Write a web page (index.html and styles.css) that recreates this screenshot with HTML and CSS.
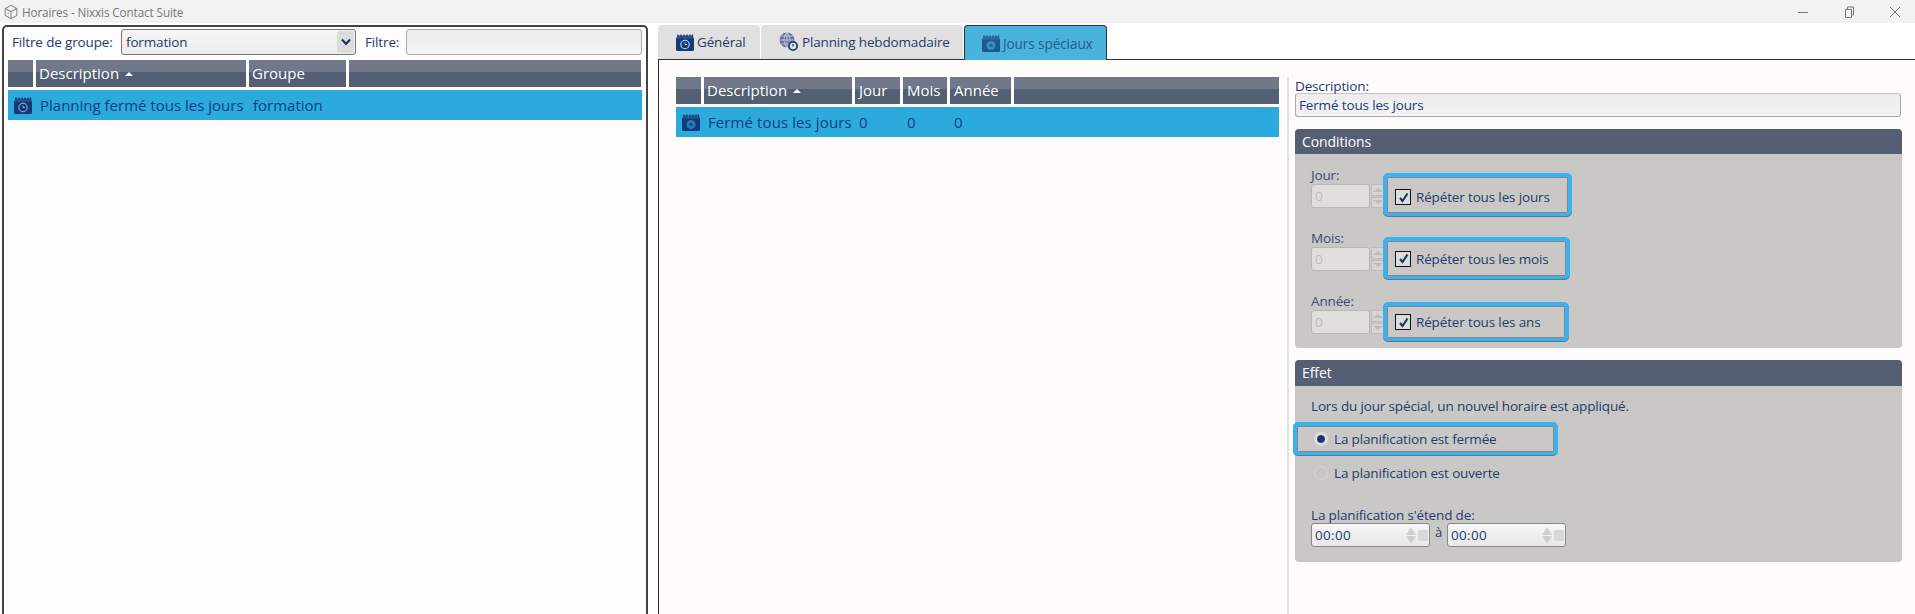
FILE: index.html
```html
<!DOCTYPE html>
<html lang="fr">
<head>
    <meta charset="UTF-8">
    <title>Horaires - Nixxis Contact Suite</title>
    <link rel="stylesheet" href="styles.css">
</head>
<body>
    <svg class="defs" width="0" height="0">
        <symbol id="cal" viewBox="0 0 18 17">
            <rect x="0" y="3" width="18" height="14" rx="1.500" fill="#123a78"/>
            <rect x="1" y="1.500" width="16" height="3" fill="#2c5590"/>
            <path d="M2 .5v2.500M5 .5v2.500M8 .5v2.500M11 .5v2.500M14 .5v2.500M16.500 .5v2.500" stroke="#123a78" stroke-width="1.300"/>
        </symbol>
    </svg>

    <div class="titlebar">
        <svg class="app-icon" width="16" height="16" viewBox="0 0 18 18">
            <path d="M9 1.500l6.500 3.500v8L9 16.500l-6.500-3.500V5z M2.500 5L9 8.500l6.500-3.500M9 8.500v8" fill="none" stroke="#8a8a8a" stroke-width="1.200"/>
            <circle cx="6" cy="10.500" r="1" fill="#d9a38a"/>
        </svg>
        <span class="app-title">Horaires - Nixxis Contact Suite</span>
        <div class="win-buttons">
            <svg width="12" height="12" viewBox="0 0 12 12"><path d="M1 6.500h10" stroke="#777"/></svg>
            <svg width="12" height="12" viewBox="0 0 12 12"><path d="M2.500 3.500h6v8h-6z M4.500 3.500v-2.500h6v8h-2" fill="none" stroke="#777"/></svg>
            <svg width="12" height="12" viewBox="0 0 12 12"><path d="M1 1l10 10M11 1L1 11" stroke="#777"/></svg>
        </div>
    </div>

    <div class="main">
        <div class="left-pane">
            <div class="filter-bar">
                <label class="filter-label">Filtre de groupe:</label>
                <div class="combo">
                    <span>formation</span>
                    <span class="combo-arrow">
                        <svg width="10" height="8" viewBox="0 0 10 8"><path d="M1 1.500l4 4.500 4-4.500" fill="none" stroke="#1c2f66" stroke-width="2"/></svg>
                    </span>
                </div>
                <label class="filter-label filter-second">Filtre:</label>
                <div class="filter-input"></div>
            </div>
            <div class="grid-head groups-cols">
                <div></div>
                <div>Description <span class="sort"></span></div>
                <div>Groupe</div>
                <div></div>
            </div>
            <div class="grid-row groups-cols">
                <div class="row-icon">
                    <svg width="18" height="17"><use href="#cal"/></svg>
                    <svg class="cal-face" width="18" height="17" viewBox="0 0 18 17"><circle cx="9" cy="10.500" r="4.200" fill="none" stroke="#8fb0dc" stroke-width="1.100"/><path d="M9 8.500v2h2" fill="none" stroke="#8fb0dc"/></svg>
                </div>
                <div>Planning fermé tous les jours</div>
                <div>formation</div>
            </div>
        </div>

        <div class="right-pane">
            <div class="tabs">
                <div class="tab tab-first">
                    <span class="row-icon">
                        <svg width="18" height="17"><use href="#cal"/></svg>
                        <svg class="cal-face" width="18" height="17" viewBox="0 0 18 17"><circle cx="9" cy="10.500" r="4.200" fill="none" stroke="#c9d8ee" stroke-width="1.100"/><path d="M9 8.500v2h2" fill="none" stroke="#c9d8ee"/></svg>
                    </span>
                    Général
                </div>
                <div class="tab tab-second">
                    <svg width="20" height="20" viewBox="0 0 20 20">
                        <circle cx="8" cy="8" r="7.500" fill="#5f7198"/>
                        <path d="M.5 8h15M8 .5v15M2 4h12M2 12h12M8 .5c-4 4-4 11 0 15M8 .5c4 4 4 11 0 15" fill="none" stroke="#e6e6e6" stroke-width=".7"/>
                        <circle cx="14" cy="14" r="5" fill="#1c3f7c"/>
                        <circle cx="14" cy="14" r="3.200" fill="#e0e0e0"/>
                        <path d="M14 12v2.500" stroke="#1c3f7c" stroke-width="1.200"/>
                    </svg>
                    Planning hebdomadaire
                </div>
                <div class="tab tab-active">
                    <span class="row-icon icon-dim">
                        <svg width="18" height="17"><use href="#cal"/></svg>
                        <svg class="cal-face" width="18" height="17" viewBox="0 0 18 17"><circle cx="9" cy="10.500" r="4.500" fill="#48b3dc" opacity=".6"/><path d="M9 8.500l2.500 3h-5z" fill="#1c3f7c"/></svg>
                    </span>
                    Jours spéciaux
                </div>
            </div>

            <div class="tab-content">
                <div class="days-list">
                    <div class="grid-head days-cols">
                        <div></div>
                        <div>Description <span class="sort"></span></div>
                        <div>Jour</div>
                        <div>Mois</div>
                        <div>Année</div>
                        <div></div>
                    </div>
                    <div class="grid-row days-cols">
                        <div class="row-icon">
                            <svg width="18" height="17"><use href="#cal"/></svg>
                            <svg class="cal-face" width="18" height="17" viewBox="0 0 18 17"><circle cx="9" cy="10.500" r="4.500" fill="#2caadb" opacity=".6"/><path d="M9 8.500l2.500 3h-5z" fill="#1c3f7c"/></svg>
                        </div>
                        <div>Fermé tous les jours</div>
                        <div>0</div>
                        <div>0</div>
                        <div>0</div>
                    </div>
                </div>

                <div class="details">
                    <div class="field-label">Description:</div>
                    <div class="desc-input">Fermé tous les jours</div>

                    <div class="group">
                        <div class="group-title">Conditions</div>
                        <div class="group-body conditions">
                            <div class="cond-row">
                                <div class="cond-field">
                                    <div class="field-label dim">Jour:</div>
                                    <div class="spin">
                                        <div class="spin-input">0</div>
                                        <div class="spin-btns"><span class="spin-cell"><span class="up"></span></span><span class="spin-cell"><span class="down"></span></span></div>
                                    </div>
                                </div>
                                <div class="focus-box check-jour">
                                    <span class="check"><svg width="13" height="13" viewBox="0 0 13 13"><path d="M3 7l2.500 3L10.500 2.500" fill="none" stroke="#1c2f66" stroke-width="2"/></svg></span>
                                    Répéter tous les jours
                                </div>
                            </div>
                            <div class="cond-row">
                                <div class="cond-field">
                                    <div class="field-label dim">Mois:</div>
                                    <div class="spin">
                                        <div class="spin-input">0</div>
                                        <div class="spin-btns"><span class="spin-cell"><span class="up"></span></span><span class="spin-cell"><span class="down"></span></span></div>
                                    </div>
                                </div>
                                <div class="focus-box check-mois">
                                    <span class="check"><svg width="13" height="13" viewBox="0 0 13 13"><path d="M3 7l2.500 3L10.500 2.500" fill="none" stroke="#1c2f66" stroke-width="2"/></svg></span>
                                    Répéter tous les mois
                                </div>
                            </div>
                            <div class="cond-row cond-last">
                                <div class="cond-field">
                                    <div class="field-label dim">Année:</div>
                                    <div class="spin">
                                        <div class="spin-input">0</div>
                                        <div class="spin-btns"><span class="spin-cell"><span class="up"></span></span><span class="spin-cell"><span class="down"></span></span></div>
                                    </div>
                                </div>
                                <div class="focus-box check-ans">
                                    <span class="check"><svg width="13" height="13" viewBox="0 0 13 13"><path d="M3 7l2.500 3L10.500 2.500" fill="none" stroke="#1c2f66" stroke-width="2"/></svg></span>
                                    Répéter tous les ans
                                </div>
                            </div>
                        </div>
                    </div>

                    <div class="group group-effect">
                        <div class="group-title">Effet</div>
                        <div class="group-body effect">
                            <div class="effect-text">Lors du jour spécial, un nouvel horaire est appliqué.</div>
                            <div class="focus-box radio-box">
                                <span class="radio radio-on"></span>
                                La planification est fermée
                            </div>
                            <div class="radio-line">
                                <span class="radio"></span>
                                La planification est ouverte
                            </div>
                            <div class="field-label range-label">La planification s'étend de:</div>
                            <div class="time-row">
                                <div class="time-input">
                                    <span class="time-value">00:00</span>
                                    <span class="time-arrows"><span class="up"></span><span class="down"></span></span>
                                    <span class="time-square"></span>
                                </div>
                                <span class="time-sep">à</span>
                                <div class="time-input">
                                    <span class="time-value">00:00</span>
                                    <span class="time-arrows"><span class="up"></span><span class="down"></span></span>
                                    <span class="time-square"></span>
                                </div>
                            </div>
                        </div>
                    </div>
                </div>
            </div>
        </div>
    </div>
</body>
</html>
```

FILE: styles.css
```css
html, body {
    margin: 0;
    height: 614px;
    overflow: hidden;
}

body {
    font-family: "Open Sans", "Noto Sans", sans-serif;
    font-size: 13.5px;
    letter-spacing: -0.15px;
    color: #27396f;
    background-color: #fff;
}

.defs {
    position: absolute;
}

/* title bar */
.titlebar {
    height: 23px;
    background-color: #f2f2f2;
    display: flex;
    align-items: center;
    padding-left: 3px;
}

.app-title {
    margin-left: 3px;
    font-size: 11.7px;
    letter-spacing: -0.1px;
    color: #777;
}

.win-buttons {
    margin-left: auto;
    display: flex;
    gap: 34px;
    padding-right: 14px;
}

/* main area */
.main {
    display: flex;
    height: 591px;
}

.left-pane {
    flex: none;
    width: 634px;
    margin: 2px 0 0 2px;
    border: solid #444;
    border-width: 2px 2px 0 2px;
    border-radius: 5px 5px 0 0;
    background-color: #fdfdfd;
    padding: 2px 4px 0 4px;
}

.filter-bar {
    display: flex;
    align-items: center;
    height: 26px;
    margin-bottom: 5px;
}

.filter-label {
    color: #27396f;
    padding-left: 4px;
    width: 109px;
    flex: none;
}

.filter-second {
    width: 41px;
    padding-left: 9px;
}

.combo {
    width: 237px;
    height: 26px;
    box-sizing: border-box;
    border: 1px solid #777;
    border-radius: 3px;
    background: linear-gradient(#f5f5f5, #ececec);
    display: flex;
    align-items: center;
    justify-content: space-between;
    padding-left: 4px;
}

.combo-arrow {
    width: 17px;
    height: 22px;
    margin-right: 1px;
    background-color: #dcdcdc;
    border-radius: 2px;
    display: flex;
    align-items: center;
    justify-content: center;
}

.filter-input {
    width: 238px;
    height: 26px;
    box-sizing: border-box;
    border: 1px solid #aaa;
    border-radius: 3px;
    background: linear-gradient(#ececec, #f4f4f4);
}

/* lists */
.grid-head, .grid-row {
    display: grid;
    letter-spacing: 0;
    font-size: 15px;
}

.grid-head {
    height: 27px;
    column-gap: 3px;
    margin-bottom: 3px;
    color: #fff;
}

.grid-head > div {
    background: linear-gradient(#707889 0, #707889 45%, #545f74 45%, #545f74 100%);
    line-height: 27px;
    padding-left: 3px;
}

.grid-row {
    height: 30px;
    background-color: #2caadb;
    color: #0d3f86;
    column-gap: 3px;
    align-items: center;
}

.groups-cols {
    grid-template-columns: 25px 210px 97px 1fr;
}

.grid-head.groups-cols {
    width: 633px;
}

.grid-row.groups-cols {
    width: 634px;
}

.grid-row.groups-cols > div:nth-child(n+2) {
    padding-left: 4px;
}

.days-cols {
    grid-template-columns: 25px 148px 45px 44px 61px 1fr;
}

.grid-head.days-cols > div:nth-child(n+3) {
    padding-left: 4px;
}

.grid-row.days-cols > div:nth-child(n+2) {
    padding-left: 4px;
    white-space: nowrap;
}

.grid-row.days-cols > div:nth-child(2) {
    letter-spacing: 0.1px;
}

.sort {
    display: inline-block;
    width: 0;
    height: 0;
    margin: 0 0 3px 2px;
    border: 4px solid transparent;
    border-top: 0;
    border-bottom: 4px solid #fff;
}

.row-icon {
    position: relative;
    display: inline-block;
    width: 18px;
    height: 17px;
    line-height: 0;
}

.grid-row .row-icon {
    margin-left: 6px;
}

.icon-dim {
    opacity: 0.75;
}

.cal-face {
    position: absolute;
    left: 0;
    top: 0;
}

/* tabs */
.right-pane {
    flex: 1;
    margin-left: 10px;
    display: flex;
    flex-direction: column;
    min-width: 0;
}

.tabs {
    display: flex;
    height: 36px;
    padding-top: 2px;
    box-sizing: border-box;
}

.tab {
    display: flex;
    align-items: center;
    gap: 3px;
    background-color: #e0e0e0;
    font-size: 13.5px;
    border-radius: 4px 4px 0 0;
    box-sizing: border-box;
    height: 34px;
}

.tab-first {
    width: 102px;
    padding-left: 18px;
    margin-right: 1px;
}

.tab-second {
    width: 202px;
    padding-left: 18px;
    margin-right: 1px;
}

.tab-active {
    width: 143px;
    padding-left: 17px;
    background-color: #48b3dc;
    border: 1px solid #333;
    border-bottom: 0;
    color: #2a5a90;
    font-size: 13.7px;
    height: 35px;
    position: relative;
    margin-bottom: -1px;
}

.tab-content {
    flex: 1;
    display: flex;
    border-top: 1px solid #333;
    border-left: 1px solid #333;
    background-color: #fdfcfb;
    padding: 17px 0 0 17px;
    min-height: 0;
}

.days-list {
    width: 603px;
    flex: none;
}

/* details side */
.details {
    margin-left: 8px;
    width: 608px;
    border-left: 2px solid #e2e2e2;
    padding-left: 6px;
}

.field-label {
    color: #27396f;
    line-height: 17px;
}

.field-label.dim {
    color: #3d4a72;
}

.details > .field-label {
    height: 16px;
    line-height: 18px;
}

.desc-input {
    width: 606px;
    height: 24px;
    box-sizing: border-box;
    border: 1px solid #aaa;
    border-top-color: #c4c4c4;
    border-radius: 3px;
    background: linear-gradient(#ececec, #f4f4f4);
    padding-left: 3px;
    line-height: 22px;
    font-size: 13.5px;
    color: #1f3a70;
}

.group {
    margin-top: 12px;
    width: 607px;
}

.group-title {
    background-color: #545f74;
    color: #fff;
    height: 25px;
    line-height: 25px;
    padding-left: 7px;
    border-radius: 4px 4px 0 0;
    font-size: 14px;
    letter-spacing: -0.1px;
}

.group-effect .group-title {
    height: 26px;
    line-height: 26px;
}

.group-body {
    background-color: #c9c8c6;
    border-radius: 0 0 4px 4px;
}

.conditions {
    height: 194px;
    padding: 13px 0 0 16px;
    box-sizing: border-box;
}

.cond-row {
    display: flex;
    height: 63px;
}

.cond-last {
    height: 62px;
}

.cond-field {
    width: 72px;
    flex: none;
}

.spin {
    display: flex;
}

.spin-input {
    width: 60px;
    height: 24px;
    box-sizing: border-box;
    border: 1px solid #b8b7b5;
    border-radius: 3px;
    background-color: #dfdedc;
    color: #bdbdbd;
    padding-left: 3px;
    line-height: 22px;
}

.spin-btns {
    width: 12px;
    margin-left: 1px;
    display: flex;
    flex-direction: column;
    gap: 1px;
    height: 24px;
}

.spin-cell {
    flex: 1;
    display: flex;
    align-items: center;
    justify-content: center;
    background-color: #d6d5d3;
    border: 1px solid #bdbcba;
    border-right: 0;
}

.spin-btns .up, .spin-btns .down,
.time-arrows .up, .time-arrows .down {
    display: block;
    width: 0;
    height: 0;
    border-left: 5px solid transparent;
    border-right: 5px solid transparent;
}

.spin-btns .up {
    border-bottom: 4px solid #bdbcba;
}

.spin-btns .down {
    border-top: 4px solid #bdbcba;
}

.focus-box {
    display: flex;
    align-items: center;
    box-sizing: border-box;
    border: 4px solid #39b3ef;
    border-bottom-width: 3px;
    border-radius: 5px;
    box-shadow: 0 1px 0 #6d7280, inset 0 0 0 1px #85868a;
    color: #27396f;
    background-color: #c9c8c6;
}

.check-jour {
    width: 189px;
    height: 43px;
    margin-top: 6px;
    padding: 4px 0 0 8px;
}

.check-mois {
    width: 187px;
    height: 42px;
    margin-top: 7px;
    padding-left: 8px;
}

.check-ans {
    width: 186px;
    height: 39px;
    margin-top: 9px;
    padding-left: 8px;
}

.check {
    width: 16px;
    height: 16px;
    box-sizing: border-box;
    border: 1.5px solid #111;
    background-color: #dcdcdc;
    margin-right: 5px;
    display: flex;
    align-items: center;
    justify-content: center;
    flex: none;
}

.effect {
    height: 176px;
    padding: 0 0 0 16px;
    box-sizing: border-box;
}

.effect-text {
    height: 36px;
    line-height: 41px;
}

.radio-box {
    width: 265px;
    height: 33px;
    margin-left: -18px;
    padding-left: 17px;
}

.radio {
    width: 14px;
    height: 14px;
    border-radius: 50%;
    box-sizing: border-box;
    border: 1px solid #d6d5d3;
    margin-right: 6px;
    flex: none;
    display: inline-block;
}

.radio-on {
    background-color: #1c3570;
    border: 3px solid #dedddb;
    background-clip: padding-box;
}

.radio-line {
    display: flex;
    align-items: center;
    height: 36px;
    padding-left: 3px;
}

.range-label {
    margin-top: 16px;
    line-height: 16px;
}

.time-row {
    display: flex;
    align-items: flex-start;
}

.time-input {
    width: 119px;
    height: 24px;
    box-sizing: border-box;
    border: 1px solid #888;
    border-radius: 3px;
    background: linear-gradient(#f6f6f6, #e8e8e8);
    display: flex;
    align-items: center;
    padding-left: 3px;
    color: #1f3a70;
    letter-spacing: 0.3px;
}

.time-value {
    flex: 1;
}

.time-arrows {
    display: flex;
    flex-direction: column;
    gap: 1px;
    margin-right: 2px;
}

.time-arrows .up {
    border-bottom: 8px solid #d0d0d0;
}

.time-arrows .down {
    border-top: 8px solid #d0d0d0;
}

.time-square {
    width: 10px;
    height: 11px;
    background-color: #d8d8d8;
    margin-right: 1px;
}

.time-sep {
    width: 17px;
    text-align: center;
    font-size: 13px;
}
```
